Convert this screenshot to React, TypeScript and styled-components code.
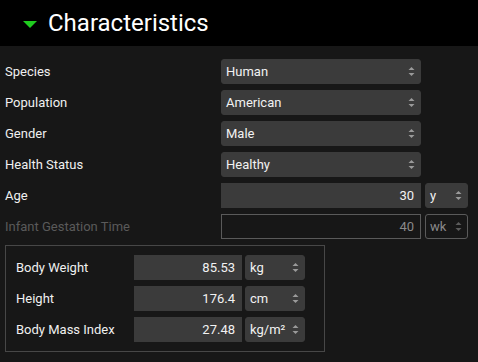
import styled, { createGlobalStyle } from "styled-components";

const Global = createGlobalStyle`
  body {
    margin: 0;
    background: #171717;
    font-family: Roboto, "Liberation Sans", sans-serif;
    color: #f2f2f2;
  }
`;

const Header = styled.header`
  height: 46px;
  background: #000;
  display: flex;
  align-items: center;
  padding-left: 23px;
  gap: 11px;
`;

const Caret = styled.span`
  width: 0;
  height: 0;
  border-left: 7px solid transparent;
  border-right: 7px solid transparent;
  border-top: 7px solid #1fcc1f;
  margin-top: 2px;
`;

const Title = styled.h1`
  margin: 0;
  font-size: 24px;
  font-weight: 400;
  color: #fff;
`;

const Body = styled.div`
  padding: 13px 5px 0 5px;
  display: flex;
  flex-direction: column;
  gap: 6px;
`;

const Row = styled.div<{ $labelWidth: number }>`
  display: grid;
  grid-template-columns: ${(p) => p.$labelWidth}px auto;
  justify-content: start;
  align-items: center;
  height: 25px;
`;

const Label = styled.span<{ $disabled?: boolean }>`
  font-size: 13px;
  color: ${(p) => (p.$disabled ? "#5a5a5a" : "#f0f0f0")};
`;

const Field = styled.div<{ $width: number; $disabled?: boolean; $align?: string }>`
  box-sizing: border-box;
  width: ${(p) => p.$width}px;
  height: 25px;
  border-radius: ${(p) => (p.$align === "right" ? "0" : "3px")};
  background: ${(p) => (p.$disabled ? "transparent" : "#3b3b3b")};
  border: 1px solid ${(p) => (p.$disabled ? "#5a5a5a" : "#3b3b3b")};
  color: ${(p) => (p.$disabled ? "#8a8a8a" : "#f2f2f2")};
  font-size: 13px;
  display: flex;
  align-items: center;
  justify-content: ${(p) => (p.$align === "right" ? "flex-end" : "space-between")};
  padding: ${(p) => (p.$align === "right" ? "0 6px 0 0" : "0 5px 0 4px")};
`;

const Fields = styled.div<{ $gap: number }>`
  display: flex;
  gap: ${(p) => p.$gap}px;
`;

const Group = styled.div`
  box-sizing: border-box;
  width: 320px;
  border: 1px solid #474747;
  padding: 9px 0 9px 10px;
  display: flex;
  flex-direction: column;
  gap: 6px;
`;

function Spinner({ dim }: { dim?: boolean }) {
  const c = dim ? "#5c5c5c" : "#9a9a9a";
  return (
    <svg width="7" height="11" viewBox="0 0 7 11">
      <path d="M3.5 1 L6.5 4 L0.5 4 Z" fill={c} />
      <path d="M3.5 10 L6.5 7 L0.5 7 Z" fill={c} />
    </svg>
  );
}

function Select({ value, width, disabled }: { value: string; width: number; disabled?: boolean }) {
  return (
    <Field $width={width} $disabled={disabled}>
      <span>{value}</span>
      <Spinner dim={disabled} />
    </Field>
  );
}

const selects = [
  ["Species", "Human"],
  ["Population", "American"],
  ["Gender", "Male"],
  ["Health Status", "Healthy"],
];

const body = [
  ["Body Weight", "85.53", "kg"],
  ["Height", "176.4", "cm"],
  ["Body Mass Index", "27.48", "kg/m²"],
];

export default function App() {
  return (
    <>
      <Global />
      <Header>
        <Caret />
        <Title>Characteristics</Title>
      </Header>
      <Body>
        {selects.map(([label, value]) => (
          <Row key={label} $labelWidth={216}>
            <Label>{label}</Label>
            <Select value={value} width={200} />
          </Row>
        ))}
        <Row $labelWidth={216}>
          <Label>Age</Label>
          <Fields $gap={4}>
            <Field $width={200} $align="right">30</Field>
            <Select value="y" width={43} />
          </Fields>
        </Row>
        <Row $labelWidth={216}>
          <Label $disabled>Infant Gestation Time</Label>
          <Fields $gap={4}>
            <Field $width={200} $align="right" $disabled>40</Field>
            <Select value="wk" width={43} disabled />
          </Fields>
        </Row>
        <Group>
          {body.map(([label, value, unit]) => (
            <Row key={label} $labelWidth={118}>
              <Label>{label}</Label>
              <Fields $gap={3}>
                <Field $width={108} $align="right">{value}</Field>
                <Select value={unit} width={60} />
              </Fields>
            </Row>
          ))}
        </Group>
      </Body>
    </>
  );
}
